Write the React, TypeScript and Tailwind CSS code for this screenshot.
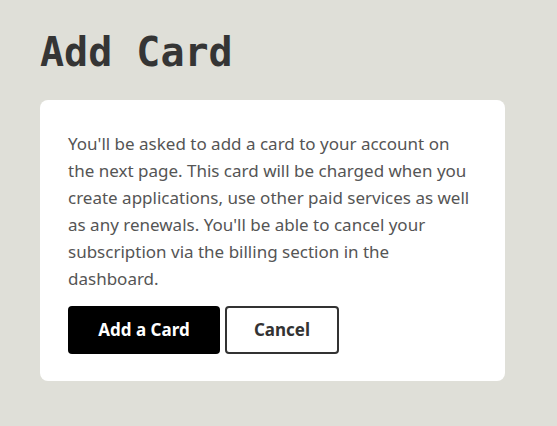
export default function App() {
  return (
    <div className="min-h-screen w-full bg-[#dfdfd8] px-10 pt-[28px]">
      <h1 className="text-[40px] leading-[48px] font-bold text-[#353535] [font-family:'DejaVu_Sans_Mono',monospace]">
        Add Card
      </h1>
      <div className="mt-[24px] w-[465px] rounded-lg bg-white px-7 pt-[30px] pb-[27px]">
        <p className="text-[17px] leading-[27px] text-[#555] [font-family:'Noto_Sans',sans-serif]">
          You'll be asked to add a card to your account on the next page. This card will be charged when you
          create applications, use other paid services as well as any renewals. You'll be able to cancel your
          subscription via the billing section in the dashboard.
        </p>
        <div className="mt-[14px] flex gap-[5px] [font-family:'Noto_Sans',sans-serif]">
          <button className="h-12 w-[152px] rounded bg-black text-[17px] font-bold text-white">Add a Card</button>
          <button className="h-12 w-[114px] rounded border-2 border-[#333] bg-white text-[17px] font-bold text-[#333]">
            Cancel
          </button>
        </div>
      </div>
    </div>
  );
}
